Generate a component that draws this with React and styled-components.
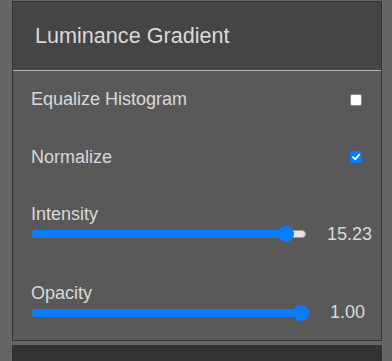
import React from "react";
import styled, { createGlobalStyle } from "styled-components";

const Global = createGlobalStyle`
  html, body { margin: 0; padding: 0; background: #666666; }
  body { font-family: "Liberation Sans", Arial, Helvetica, sans-serif; }
  #root { padding: 1px 0 0 12px; min-height: 360px; box-sizing: border-box; }
`;

const Panel = styled.div`
  width: 370px;
  box-sizing: border-box;
  border: 1px solid #333333;
  background: #595959;
`;

const Header = styled.div`
  height: 68px;
  background: #454545;
  border-bottom: 1px solid #b3b3b3;
  display: flex;
  align-items: center;
  padding-left: 22px;
  color: #dadada;
  font-size: 21.6px;
`;

const Body = styled.div`
  display: flex;
  flex-direction: column;
  padding: 0 8px 18px 18px;
`;

const CheckRow = styled.div`
  height: 57.5px;
  display: flex;
  align-items: center;
  justify-content: space-between;
  padding-right: 11px;
`;

const Label = styled.span`
  color: #d9d9d9;
  font-size: 18px;
  line-height: 21px;
`;

const Box = styled.span`
  width: 12px;
  height: 12px;
  box-sizing: border-box;
  border-radius: 2px;
  display: flex;
  align-items: center;
  justify-content: center;
  background: ${(p) => (p.$checked ? "#0a7cff" : "#ffffff")};
  border: 1px solid ${(p) => (p.$checked ? "#0a7cff" : "#8a8a8a")};
`;

const SliderGroup = styled.div`
  display: flex;
  flex-direction: column;
  padding-top: 18px;
  padding-bottom: ${(p) => p.$pb}px;
`;

const SliderRow = styled.div`
  height: 18px;
  display: flex;
  align-items: center;
`;

const Track = styled.div`
  position: relative;
  flex-shrink: 0;
  width: ${(p) => p.$w}px;
  height: 8px;
  box-sizing: border-box;
  margin-left: 1px;
  border-radius: 4px;
  background: #e6e6e6;
  border: 1px solid #9a9a9a;
`;

const Fill = styled.div`
  position: absolute;
  left: -1px;
  top: -1px;
  bottom: -1px;
  border-radius: 4px;
  background: #0a7cff;
`;

const Thumb = styled.div`
  position: absolute;
  top: 50%;
  width: 16px;
  height: 16px;
  margin-left: -8px;
  margin-top: -8px;
  border-radius: 50%;
  background: #0a7cff;
`;

const Value = styled.span`
  margin-left: 21px;
  color: #d9d9d9;
  font-size: 18px;
  white-space: nowrap;
`;

const Footer = styled.div`
  width: 370px;
  height: 20px;
  margin-top: 4px;
  background: #333333;
`;

function Check({ checked }) {
  return (
    <Box $checked={checked}>
      {checked && (
        <svg width="10" height="10" viewBox="0 0 10 10">
          <path d="M2 5.2 L4.2 7.4 L8.2 2.6" fill="none" stroke="#fff" strokeWidth="1.8" strokeLinecap="round" strokeLinejoin="round" />
        </svg>
      )}
    </Box>
  );
}

function Slider({ label, value, frac, width, pb }) {
  const x = 8 + frac * (width - 16);
  return (
    <SliderGroup $pb={pb}>
      <Label>{label}</Label>
      <SliderRow>
        <Track $w={width}>
          <Fill style={{ width: x + 1 }} />
          <Thumb style={{ left: x - 1 }} />
        </Track>
        <Value>{value}</Value>
      </SliderRow>
    </SliderGroup>
  );
}

export default function App() {
  return (
    <>
      <Global />
      <Panel>
        <Header>Luminance Gradient</Header>
        <Body>
          <CheckRow>
            <Label>Equalize Histogram</Label>
            <Check checked={false} />
          </CheckRow>
          <CheckRow>
            <Label>Normalize</Label>
            <Check checked={true} />
          </CheckRow>
          <Slider label="Intensity" value="15.23" frac={15.23 / 16} width={274} pb={21.5} />
          <Slider label="Opacity" value="1.00" frac={1} width={277} pb={0} />
        </Body>
      </Panel>
      <Footer />
    </>
  );
}
